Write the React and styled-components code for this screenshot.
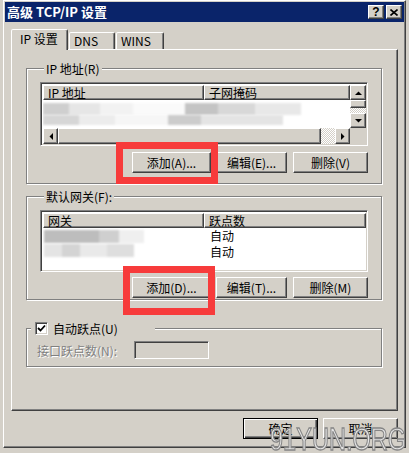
import React from "react";
import styled, { createGlobalStyle, css } from "styled-components";

const FACE = "#d4d0c8";
const SHADOW = "#808080";
const DARK = "#404040";
const FONT = `"Noto Sans CJK SC", "Liberation Sans", sans-serif`;

const Global = createGlobalStyle`
  html, body { margin: 0; padding: 0; background: ${FACE}; }
  body { font-family: ${FONT}; font-size: 12px; color: #000; overflow: hidden; }
  * { box-sizing: border-box; }
`;

const raised = css`
  border: 1px solid;
  border-color: #fff ${DARK} ${DARK} #fff;
  box-shadow: inset -1px -1px 0 ${SHADOW};
  background: ${FACE};
`;

const sunken = css`
  border: 1px solid;
  border-color: ${SHADOW} #fff #fff ${SHADOW};
  box-shadow: inset 1px 1px 0 ${DARK}, inset -1px -1px 0 ${FACE};
`;

const Page = styled.div`
  position: relative;
  width: 409px;
  height: 453px;
  padding-left: 3px;
`;

const Window = styled.div`
  width: 403px;
  height: 448px;
  background: ${FACE};
  border: 1px solid;
  border-color: #fff ${DARK} ${DARK} #fff;
  box-shadow: inset -1px -1px 0 ${SHADOW};
  padding: 1px;
  display: flex;
  flex-direction: column;
`;

const TitleBar = styled.div`
  height: 20px;
  background: #0a246a;
  display: flex;
  align-items: center;
  justify-content: space-between;
  padding: 0 2px;
`;

const TitleText = styled.div`
  color: #fff;
  font-weight: bold;
  font-size: 13px;
  line-height: 20px;
  white-space: pre;
`;

const CaptionButtons = styled.div`
  display: flex;
  gap: 2px;
`;

const CaptionButton = styled.div`
  ${raised};
  width: 16px;
  height: 14px;
  display: flex;
  align-items: center;
  justify-content: center;
  font: bold 12px "Liberation Sans", sans-serif;
  line-height: 12px;
  color: #000;
`;

const Body = styled.div`
  flex: 1;
  display: flex;
  flex-direction: column;
  padding: 0 6px;
`;

const TabRow = styled.div`
  display: flex;
  align-items: flex-end;
  height: 27px;
  padding-top: 7px;
  position: relative;
  z-index: 1;
`;

const Tab = styled.div`
  width: ${(p) => p.$w}px;
  height: ${(p) => (p.$active ? 21 : 17)}px;
  margin-bottom: ${(p) => (p.$active ? -1 : 0)}px;
  margin-left: ${(p) => (p.$active ? 0 : 1)}px;
  padding-left: ${(p) => (p.$active ? 8 : 4)}px;
  padding-top: ${(p) => (p.$active ? 2 : 1)}px;
  background: ${FACE};
  border: 1px solid;
  border-bottom: none;
  border-color: #fff ${DARK} transparent #fff;
  border-radius: 2px 2px 0 0;
  box-shadow: inset -1px 0 0 ${SHADOW};
  line-height: 14px;
  white-space: pre;
`;

const TabPanel = styled.div`
  height: 362px;
  border: 1px solid;
  border-color: #fff ${DARK} ${DARK} #fff;
  box-shadow: inset -1px -1px 0 ${SHADOW};
  padding: 12px 14px 0 14px;
  display: flex;
  flex-direction: column;
`;

const Group = styled.fieldset`
  width: 356px;
  min-width: 0;
  margin: ${(p) => p.$mt || 0}px 0 0 0;
  padding: ${(p) => p.$pad};
  border: 1px solid ${SHADOW};
  box-shadow: inset 1px 1px 0 #fff, 1px 1px 0 #fff;
  display: flex;
  flex-direction: column;
`;

const Legend = styled.legend`
  margin-left: 4px;
  padding: 0 2px;
  height: 13px;
  line-height: 13px;
  background: ${FACE};
  display: flex;
  align-items: center;
  white-space: pre;
  ${(p) => p.$w && css`width: ${p.$w}px;`}
`;

const ListView = styled.div`
  ${sunken};
  width: 328px;
  height: ${(p) => p.$h}px;
  background: #fff;
  padding: 2px 1px 1px 2px;
  display: grid;
  grid-template-columns: ${(p) => (p.$scroll ? "1fr 16px" : "1fr")};
  grid-template-rows: ${(p) => (p.$scroll ? "1fr 16px" : "1fr")};
  overflow: hidden;
`;

const ListMain = styled.div`
  display: flex;
  flex-direction: column;
  min-width: 0;
  overflow: hidden;
`;

const HeaderRow = styled.div`
  display: grid;
  grid-template-columns: 161px 1fr;
  height: 15px;
  flex: none;
`;

const HeaderCell = styled.div`
  ${raised};
  padding-left: 4px;
  line-height: 13px;
  white-space: pre;
`;

const Row = styled.div`
  display: grid;
  grid-template-columns: 161px 1fr;
  height: 16px;
  line-height: 16px;
`;

const Cell = styled.div`
  padding-left: 6px;
  position: relative;
`;

const Blur = styled.div`
  height: ${(p) => p.$h}px;
  width: ${(p) => p.$w}px;
  margin: ${(p) => p.$m || "0"};
  background: ${(p) => p.$bg};
  filter: blur(1.2px);
`;

const BlurArea = styled.div`
  padding-top: ${(p) => p.$pt || 0}px;
  display: flex;
  flex-direction: column;
`;

const VScroll = styled.div`
  display: flex;
  flex-direction: column;
  grid-row: 1;
  grid-column: 2;
`;

const HScroll = styled.div`
  display: flex;
  grid-row: 2;
  grid-column: 1;
`;

const ScrollButton = styled.div`
  ${raised};
  width: ${(p) => p.$w || 16}px;
  height: ${(p) => p.$h || 16}px;
  flex: none;
  display: flex;
  align-items: center;
  justify-content: center;
`;

const Thumb = styled.div`
  ${raised};
  width: ${(p) => (p.$w ? `${p.$w}px` : "auto")};
  height: ${(p) => (p.$h ? `${p.$h}px` : "auto")};
  flex: none;
`;

const Track = styled.div`
  flex: 1;
  background: repeating-conic-gradient(#fff 0 25%, ${FACE} 0 50%) 0 0 / 2px 2px;
`;

const Corner = styled.div`
  background: ${FACE};
  grid-row: 2;
  grid-column: 2;
`;

const ButtonRow = styled.div`
  display: flex;
  justify-content: flex-end;
  margin-top: ${(p) => p.$mt}px;
`;

const Button = styled.button`
  ${raised};
  width: ${(p) => p.$w || 75}px;
  height: 21px;
  margin-left: ${(p) => p.$ml || 0}px;
  padding: 0;
  font: 12px ${FONT};
  line-height: 19px;
  color: #000;
  white-space: pre;
  ${(p) =>
    p.$default &&
    css`
      border-color: #000;
      box-shadow: inset 1px 1px 0 #fff, inset -1px -1px 0 ${DARK},
        inset -2px -2px 0 ${SHADOW};
    `}
`;

const HighlightWrap = styled.span`
  position: relative;
  display: inline-flex;
`;

const Highlight = styled.span`
  position: absolute;
  left: ${(p) => p.$l}px;
  right: ${(p) => p.$r}px;
  top: ${(p) => p.$t}px;
  bottom: ${(p) => p.$b}px;
  border: 7px solid #f73b3b;
  z-index: 5;
  pointer-events: none;
`;

const Checkbox = styled.span`
  ${sunken};
  width: 13px;
  height: 13px;
  margin-left: 2px;
  margin-right: 5px;
  background: #fff;
  display: inline-flex;
  align-items: center;
  justify-content: center;
`;

const FieldRow = styled.div`
  display: flex;
  align-items: center;
  padding-left: 10px;
`;

const DisabledLabel = styled.span`
  color: ${SHADOW};
  text-shadow: 1px 1px 0 #fff;
  width: 97px;
  white-space: pre;
`;

const TextInput = styled.div`
  ${sunken};
  width: 75px;
  height: 18px;
  background: ${FACE};
`;

const Footer = styled.div`
  display: flex;
  justify-content: flex-end;
  gap: 5px;
  margin-top: 7px;
`;

const Watermark = styled.div`
  position: absolute;
  left: 270px;
  top: 424px;
  font: 31px "Liberation Sans", sans-serif;
  line-height: 31px;
  color: #e4e4e4;
  -webkit-text-stroke: 1.3px #858585;
  transform: scaleX(0.76);
  transform-origin: left top;
  white-space: nowrap;
  z-index: 6;
  pointer-events: none;
`;

const Arrow = ({ dir }) => {
  const pts = {
    up: "0,4 7,4 3.5,0.5",
    down: "0,0 7,0 3.5,3.5",
    left: "4,0 4,7 0.5,3.5",
    right: "0,0 0,7 3.5,3.5",
  }[dir];
  const vert = dir === "up" || dir === "down";
  return (
    <svg width={vert ? 7 : 4} height={vert ? 4 : 7} viewBox={vert ? "0 0 7 4" : "0 0 4 7"}>
      <polygon points={pts} fill="#000" />
    </svg>
  );
};

const CloseIcon = () => (
  <svg width="8" height="7" viewBox="0 0 8 7">
    <path d="M0.5 0.5 L7.5 6.5 M7.5 0.5 L0.5 6.5" stroke="#000" strokeWidth="1.6" />
  </svg>
);

const CheckIcon = () => (
  <svg width="9" height="9" viewBox="0 0 9 9">
    <path d="M1 4 L3.5 6.5 L8 1.5" stroke="#000" strokeWidth="1.8" fill="none" />
  </svg>
);

export default function App() {
  return (
    <Page>
      <Global />
      <Window>
        <TitleBar>
          <TitleText>高级 TCP/IP 设置</TitleText>
          <CaptionButtons>
            <CaptionButton>?</CaptionButton>
            <CaptionButton>
              <CloseIcon />
            </CaptionButton>
          </CaptionButtons>
        </TitleBar>
        <Body>
          <TabRow>
            <Tab $active $w={57}>IP 设置</Tab>
            <Tab $w={46}>DNS</Tab>
            <Tab $w={48}>WINS</Tab>
          </TabRow>
          <TabPanel>
            <Group $pad="7px 13px 10px 13px">
              <Legend>IP 地址(R)</Legend>
              <ListView $h={64} $scroll>
                <ListMain>
                  <HeaderRow>
                    <HeaderCell>IP 地址</HeaderCell>
                    <HeaderCell>子网掩码</HeaderCell>
                  </HeaderRow>
                  <BlurArea $pt={3}>
                    <Blur
                      $h={12}
                      $w={258}
                      $bg="linear-gradient(90deg,#cfcfcf 0 10%,#e6e6e6 10% 22%,#f2f2f2 22% 35%,#fafafa 35% 55%,#c4c4c4 55% 68%,#d8d8d8 68% 82%,#e8e8e8 82% 100%)"
                    />
                    <Blur
                      $h={10}
                      $w={240}
                      $bg="linear-gradient(90deg,#d6d6d6 0 15%,#ececec 15% 30%,#f6f6f6 30% 52%,#cccccc 52% 66%,#e4e4e4 66% 100%)"
                    />
                  </BlurArea>
                </ListMain>
                <VScroll>
                  <ScrollButton $h={15}>
                    <Arrow dir="up" />
                  </ScrollButton>
                  <Thumb $h={8} />
                  <Track />
                  <ScrollButton $h={15}>
                    <Arrow dir="down" />
                  </ScrollButton>
                </VScroll>
                <HScroll>
                  <ScrollButton $w={15}>
                    <Arrow dir="left" />
                  </ScrollButton>
                  <Thumb $w={263} />
                  <Track />
                  <ScrollButton $w={15}>
                    <Arrow dir="right" />
                  </ScrollButton>
                </HScroll>
                <Corner />
              </ListView>
              <ButtonRow $mt={6}>
                <HighlightWrap>
                  <Button $w={79}>添加(A)...</Button>
                  <Highlight $l={-16} $r={-7} $t={-10} $b={-11} />
                </HighlightWrap>
                <Button $w={71} $ml={5}>编辑(E)...</Button>
                <Button $w={75} $ml={6}>删除(V)</Button>
              </ButtonRow>
            </Group>

            <Group $mt={6} $pad="7px 13px 1px 13px">
              <Legend>默认网关(F):</Legend>
              <ListView $h={62}>
                <ListMain>
                  <HeaderRow>
                    <HeaderCell>网关</HeaderCell>
                    <HeaderCell>跃点数</HeaderCell>
                  </HeaderRow>
                  <Row>
                    <Cell>
                      <Blur
                        $h={13}
                        $w={100}
                        $m="2px 0 0 -5px"
                        $bg="linear-gradient(90deg,#bdbdbd 0 55%,#cfcfcf 55% 75%,#efefef 75% 100%)"
                      />
                    </Cell>
                    <Cell>自动</Cell>
                  </Row>
                  <Row>
                    <Cell>
                      <Blur
                        $h={13}
                        $w={90}
                        $m="0 0 0 -5px"
                        $bg="linear-gradient(90deg,#e4e4e4 0 20%,#d4d4d4 20% 40%,#e9e9e9 40% 70%,#dedede 70% 100%)"
                      />
                    </Cell>
                    <Cell>自动</Cell>
                  </Row>
                </ListMain>
              </ListView>
              <ButtonRow $mt={5}>
                <HighlightWrap>
                  <Button $w={79}>添加(D)...</Button>
                  <Highlight $l={-9} $r={-4} $t={-11} $b={-17} />
                </HighlightWrap>
                <Button $w={71} $ml={5}>编辑(T)...</Button>
                <Button $w={75} $ml={6}>删除(M)</Button>
              </ButtonRow>
            </Group>

            <Group $mt={22} $pad="6px 13px 7px 0">
              <Legend $w={124}>
                <Checkbox>
                  <CheckIcon />
                </Checkbox>
                自动跃点(U)
              </Legend>
              <FieldRow>
                <DisabledLabel>接口跃点数(N):</DisabledLabel>
                <TextInput />
              </FieldRow>
            </Group>
          </TabPanel>
          <Footer>
            <Button $default>确定</Button>
            <Button>取消</Button>
          </Footer>
        </Body>
      </Window>
      <Watermark>91YUN.ORG</Watermark>
    </Page>
  );
}
